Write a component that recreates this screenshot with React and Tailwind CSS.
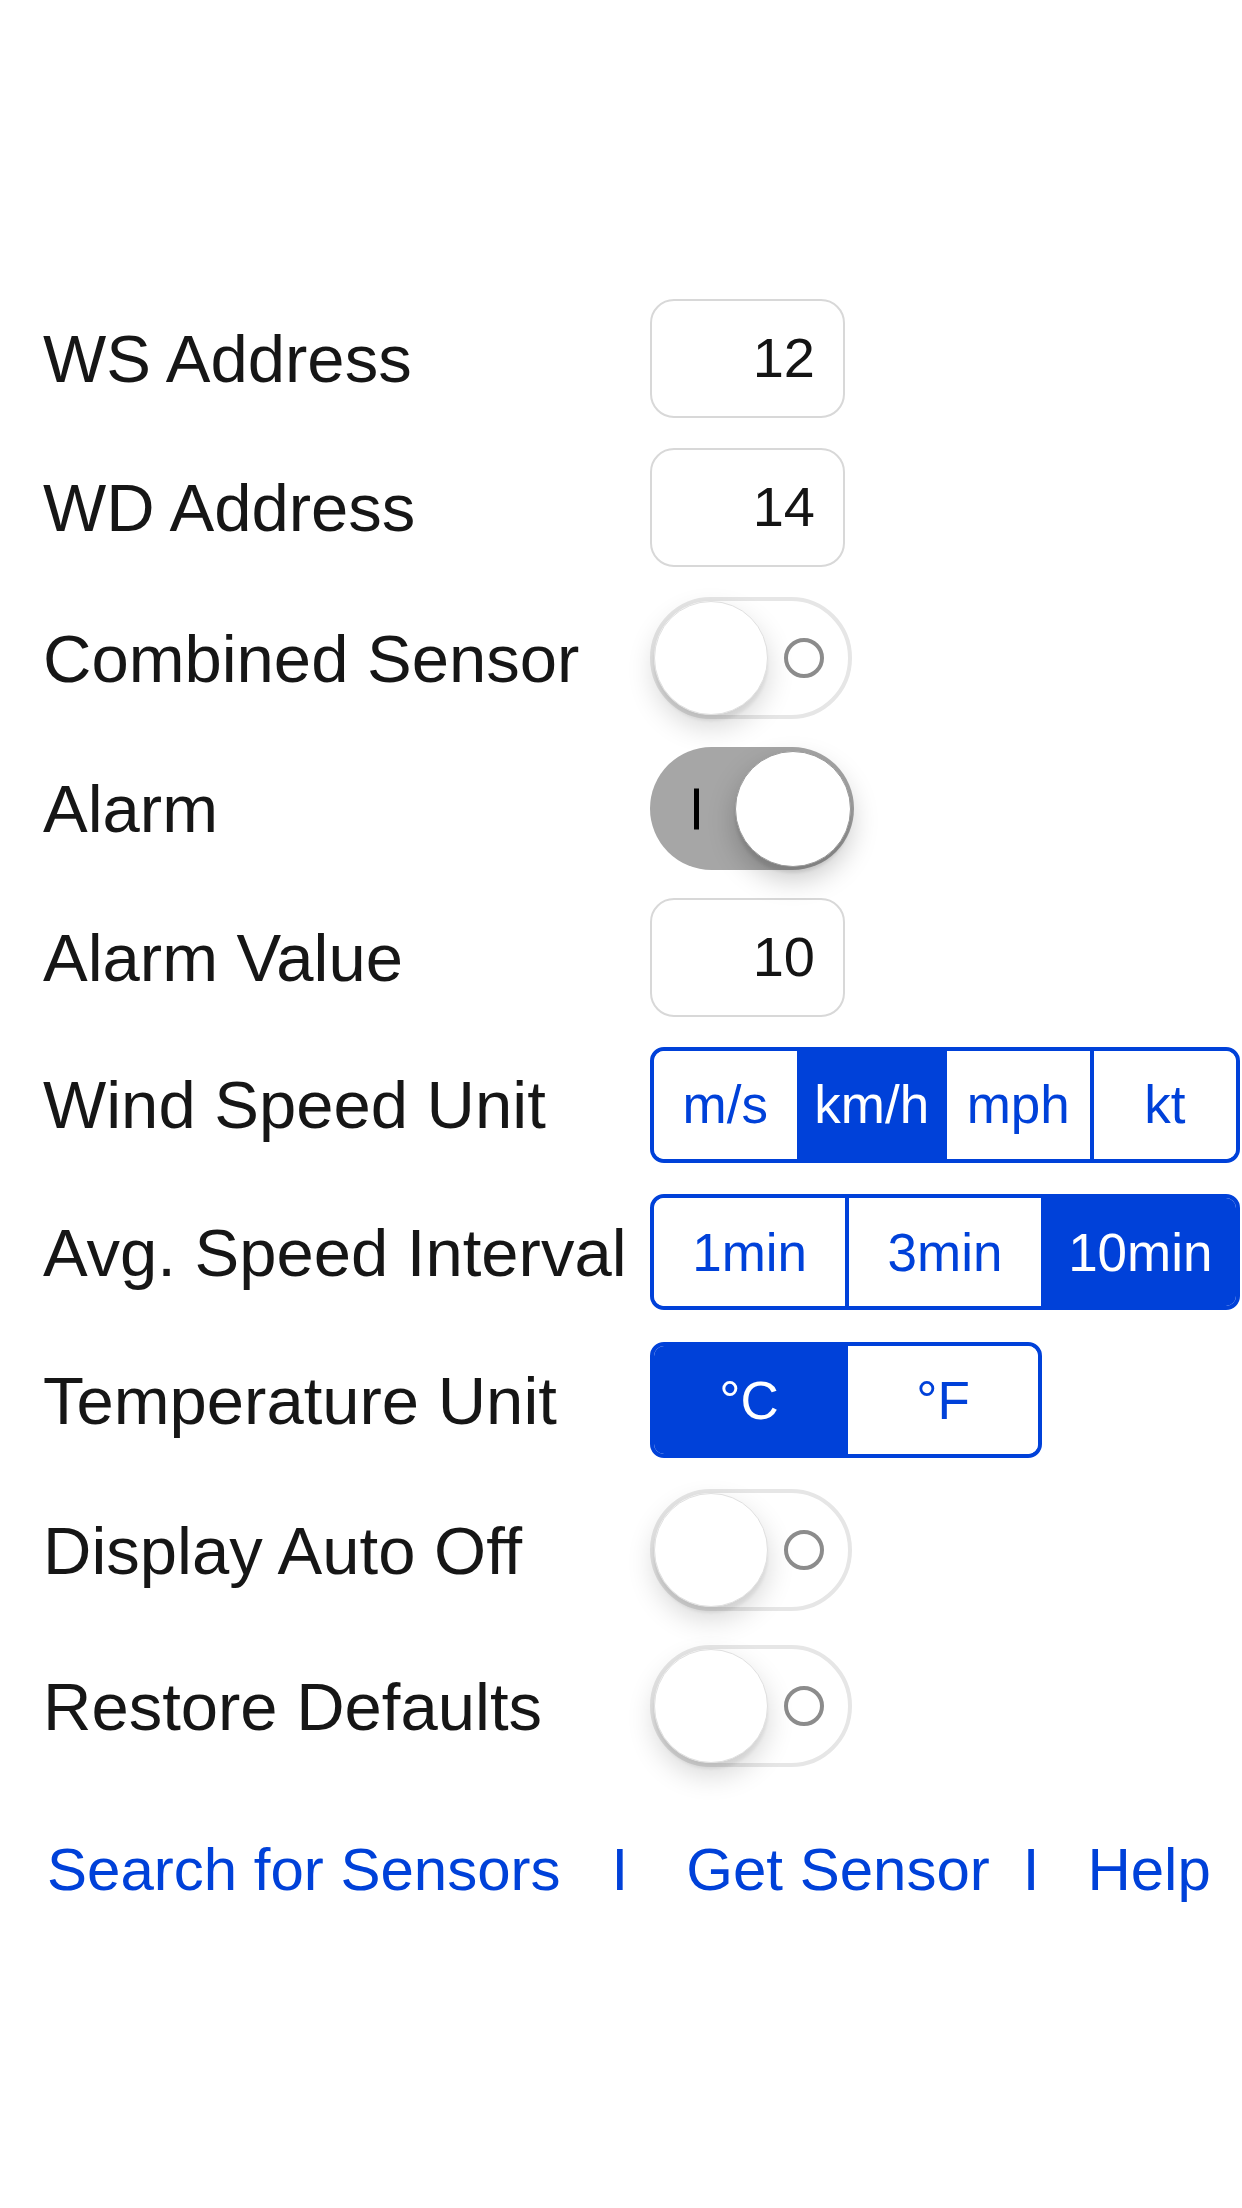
import React from "react";

const NumberBox = ({ value }) => (
  <div className="w-[195px] h-[119px] rounded-[24px] border-2 border-[#d8d8d8] bg-white flex items-center justify-end pr-[28px] text-[56px] leading-none text-[#141414]">
    {value}
  </div>
);

const Toggle = ({ on }) => {
  if (on) {
    return (
      <div className="relative w-[204px] h-[123px] rounded-full bg-[#a6a6a6]">
        <div className="absolute left-[44px] top-1/2 -translate-y-1/2 w-[5px] h-[41px] bg-black" />
        <div className="absolute right-[3px] top-[4px] w-[116px] h-[116px] rounded-full bg-white border border-[#9a9a9a] shadow-[0_12px_28px_rgba(0,0,0,0.22),0_6px_3px_rgba(0,0,0,0.08)]" />
      </div>
    );
  }
  return (
    <div className="relative w-[202px] h-[122px] rounded-full border-4 border-[#e6e6e6] bg-white">
      <div className="absolute right-[24px] top-1/2 -translate-y-1/2 w-[40px] h-[40px] rounded-full border-4 border-[#8c8c8c]" />
      <div className="absolute left-0 top-0 w-[114px] h-[114px] rounded-full bg-white border border-[#e0e0e0] shadow-[0_12px_28px_rgba(0,0,0,0.16),0_6px_3px_rgba(0,0,0,0.06)]" />
    </div>
  );
};

const Segmented = ({ options, selected, width }) => (
  <div
    className={`${width} h-[116px] flex rounded-[14px] border-4 border-[#0041d9] overflow-hidden`}
  >
    {options.map((opt, i) => (
      <div
        key={opt}
        className={
          "flex-1 flex items-center justify-center text-[53px] leading-none " +
          (i > 0 ? "border-l-4 border-[#0041d9] " : "") +
          (i === selected
            ? "bg-[#0041d9] text-white"
            : "bg-white text-[#0041d9]")
        }
      >
        {opt}
      </div>
    ))}
  </div>
);

const rows = [
  { label: "WS Address", h: "h-[148px]", control: <NumberBox value="12" /> },
  { label: "WD Address", h: "h-[150px]", control: <NumberBox value="14" /> },
  { label: "Combined Sensor", h: "h-[152px]", control: <Toggle /> },
  { label: "Alarm", h: "h-[149px]", control: <Toggle on /> },
  { label: "Alarm Value", h: "h-[148px]", control: <NumberBox value="10" /> },
  {
    label: "Wind Speed Unit",
    h: "h-[147px]",
    control: (
      <Segmented
        width="w-[590px]"
        options={["m/s", "km/h", "mph", "kt"]}
        selected={1}
      />
    ),
  },
  {
    label: "Avg. Speed Interval",
    h: "h-[148px]",
    control: (
      <Segmented
        width="w-[590px]"
        options={["1min", "3min", "10min"]}
        selected={2}
      />
    ),
  },
  {
    label: "Temperature Unit",
    h: "h-[148px]",
    control: (
      <Segmented width="w-[392px]" options={["°C", "°F"]} selected={0} />
    ),
  },
  { label: "Display Auto Off", h: "h-[152px]", control: <Toggle /> },
  { label: "Restore Defaults", h: "h-[160px]", control: <Toggle /> },
];

export default function App() {
  return (
    <div className="w-[1242px] min-h-[2208px] bg-white pt-[284px] font-['Liberation_Sans',Arial,sans-serif]">
      {/* Settings rows */}
      {rows.map((row) => (
        <div key={row.label} className={`${row.h} flex items-center`}>
          <div className="w-[650px] pl-[43px] text-[67px] leading-none text-[#161616] whitespace-nowrap">
            {row.label}
          </div>
          {row.control}
        </div>
      ))}

      {/* Links */}
      <div className="h-[168px] flex items-center pl-[47px] text-[60px] leading-none text-[#0041d9] whitespace-nowrap">
        <span>Search for Sensors</span>
        <span className="ml-[51px]">I</span>
        <span className="ml-[58px]">Get Sensor</span>
        <span className="ml-[33px]">I</span>
        <span className="ml-[48px]">Help</span>
      </div>
    </div>
  );
}
